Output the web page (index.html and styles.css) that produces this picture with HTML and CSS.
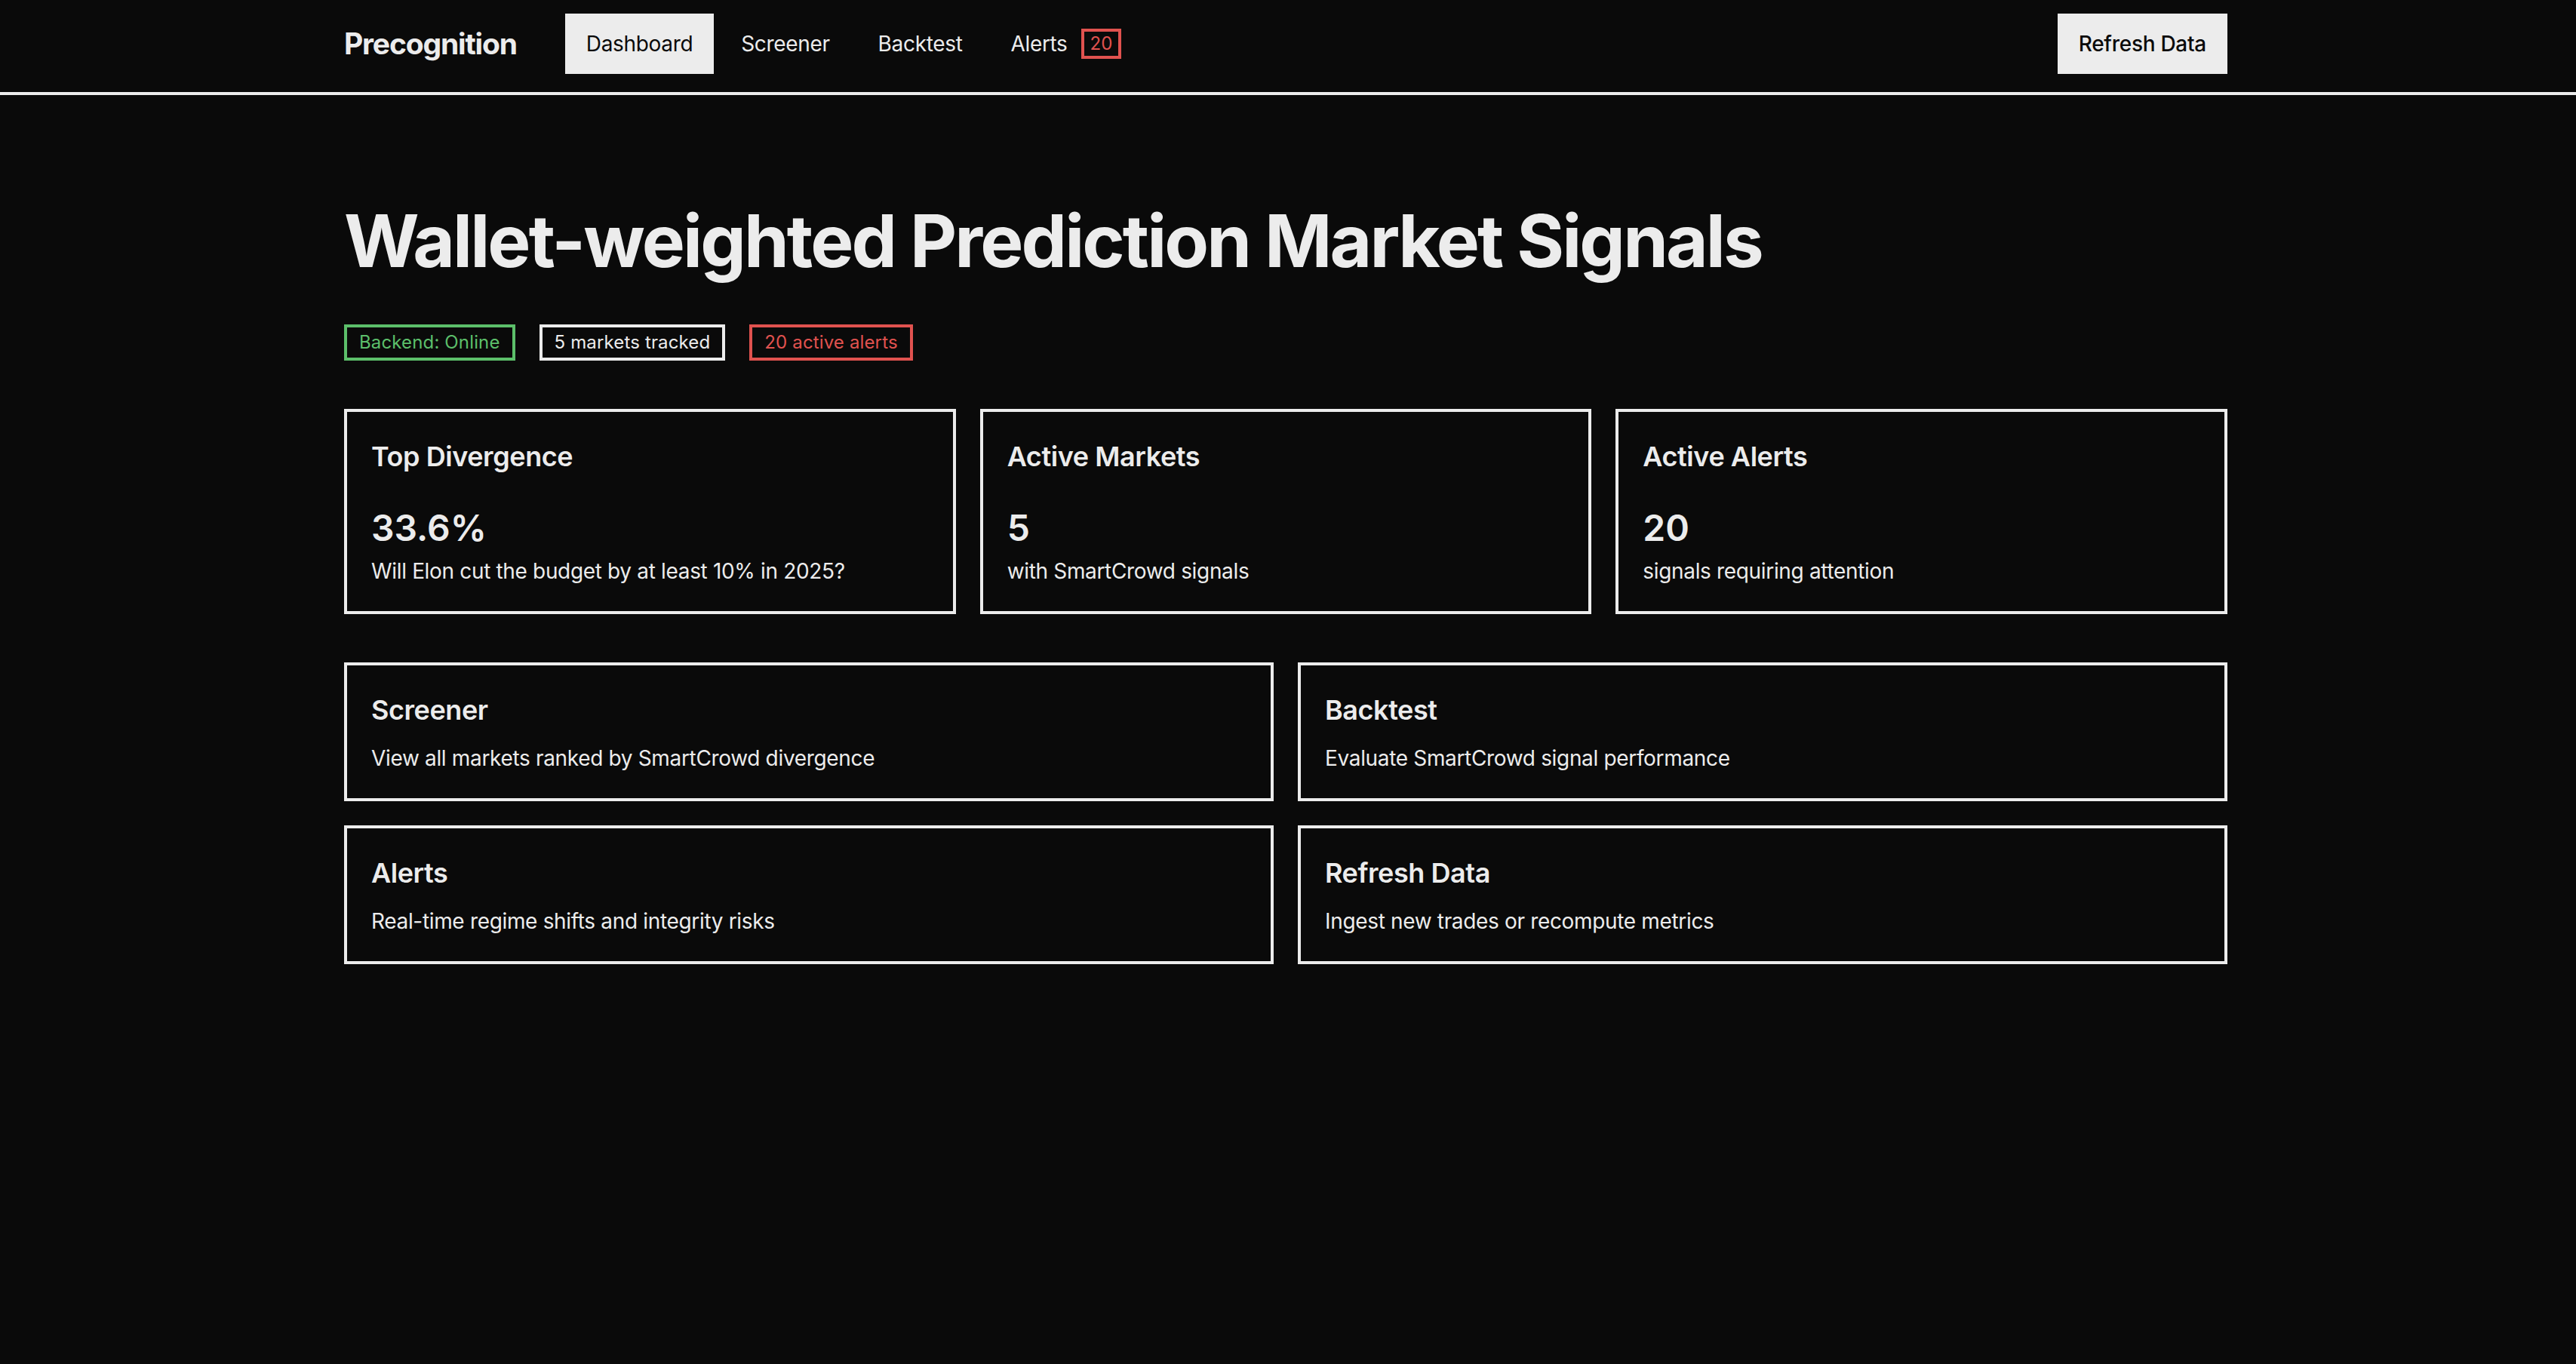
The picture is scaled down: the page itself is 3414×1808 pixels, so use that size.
FILE: index.html
```html
<!DOCTYPE html>
<html lang="en">
<head>
<meta charset="utf-8">
<title>Precognition</title>
<link rel="stylesheet" href="styles.css">
</head>
<body>
<header class="topbar">
  <div class="container topbar-inner">
    <div class="topbar-left">
      <div class="logo">Precognition</div>
      <nav class="nav">
        <a class="nav-link active">Dashboard</a>
        <a class="nav-link">Screener</a>
        <a class="nav-link">Backtest</a>
        <a class="nav-link">Alerts <span class="nav-badge">20</span></a>
      </nav>
    </div>
    <button class="btn">Refresh Data</button>
  </div>
</header>
<main class="container main">
  <h1 class="title">Wallet-weighted Prediction Market Signals</h1>
  <div class="status-row">
    <span class="pill pill-green">Backend: Online</span>
    <span class="pill pill-white">5 markets tracked</span>
    <span class="pill pill-red">20 active alerts</span>
  </div>
  <section class="stats">
    <div class="card">
      <h3 class="card-title stat-title">Top Divergence</h3>
      <div class="stat-value">33.6%</div>
      <p class="card-text">Will Elon cut the budget by at least 10% in 2025?</p>
    </div>
    <div class="card">
      <h3 class="card-title stat-title">Active Markets</h3>
      <div class="stat-value">5</div>
      <p class="card-text">with SmartCrowd signals</p>
    </div>
    <div class="card">
      <h3 class="card-title stat-title">Active Alerts</h3>
      <div class="stat-value">20</div>
      <p class="card-text">signals requiring attention</p>
    </div>
  </section>
  <section class="links">
    <div class="card">
      <h3 class="card-title link-title">Screener</h3>
      <p class="card-text">View all markets ranked by SmartCrowd divergence</p>
    </div>
    <div class="card">
      <h3 class="card-title link-title">Backtest</h3>
      <p class="card-text">Evaluate SmartCrowd signal performance</p>
    </div>
    <div class="card">
      <h3 class="card-title link-title">Alerts</h3>
      <p class="card-text">Real-time regime shifts and integrity risks</p>
    </div>
    <div class="card">
      <h3 class="card-title link-title">Refresh Data</h3>
      <p class="card-text">Ingest new trades or recompute metrics</p>
    </div>
  </section>
</main>
</body>
</html>
```

FILE: styles.css
```css
* { box-sizing: border-box; }

html, body {
  margin: 0;
  padding: 0;
  background: #0a0a0a;
  color: #ececec;
  font-family: Inter, "Noto Sans", "Liberation Sans", sans-serif;
  min-height: 100vh;
}

body {
  padding-right: 6px;
}

.container {
  width: 2496px;
  margin: 0 auto;
}

.topbar {
  border-bottom: 4px solid #ececec;
  padding: 18px 6px 24px 0;
  margin-right: -6px;
}

.topbar-inner {
  display: flex;
  align-items: center;
  justify-content: space-between;
}

.topbar-left {
  display: flex;
  align-items: center;
  gap: 64px;
}

.logo {
  font-size: 39px;
  font-weight: 700;
  letter-spacing: -0.03em;
  line-height: 56px;
}

.nav {
  display: flex;
  align-items: center;
  gap: 8px;
}

.nav-link {
  display: flex;
  align-items: center;
  gap: 18px;
  font-size: 28px;
  line-height: 40px;
  letter-spacing: -0.012em;
  padding: 20px 28px;
  color: #ececec;
  cursor: pointer;
}

.nav-link.active {
  background: #ececec;
  color: #0a0a0a;
}

.nav-badge {
  border: 4px solid #e0524f;
  color: #e0524f;
  font-size: 24px;
  line-height: 32px;
  letter-spacing: 0;
  padding: 0 8px;
}

.btn {
  font-family: inherit;
  font-size: 28px;
  line-height: 40px;
  letter-spacing: -0.01em;
  padding: 20px 28px;
  background: #ececec;
  color: #0a0a0a;
  border: none;
  border-radius: 0;
  font-weight: 500;
}

.main {
  padding-top: 136px;
  padding-bottom: 64px;
}

.title {
  margin: 0 0 53px;
  font-size: 96px;
  line-height: 1.2;
  font-weight: 700;
  letter-spacing: -0.03em;
}

.status-row {
  display: flex;
  gap: 32px;
  margin-bottom: 64px;
}

.pill {
  border: 4px solid;
  font-size: 24px;
  line-height: 32px;
  letter-spacing: 0.006em;
  padding: 4px 16px;
}

.pill-green { color: #5cbf6a; border-color: #5cbf6a; }
.pill-white { color: #ececec; border-color: #ececec; }
.pill-red { color: #e0524f; border-color: #e0524f; }

.stats {
  display: grid;
  grid-template-columns: repeat(3, 1fr);
  gap: 32px;
  margin-bottom: 64px;
}

.links {
  display: grid;
  grid-template-columns: repeat(2, 1fr);
  gap: 32px;
}

.card {
  border: 4px solid #ececec;
  padding: 32px;
}

.card-title {
  margin: 0;
  font-size: 36px;
  line-height: 54px;
  font-weight: 600;
  letter-spacing: -0.012em;
}

.stat-title { margin-bottom: 32px; }
.link-title { margin-bottom: 16px; }

.stat-value {
  font-size: 48px;
  line-height: 72px;
  font-weight: 600;
}

.card-text {
  margin: 0;
  font-size: 28px;
  line-height: 42px;
  letter-spacing: -0.012em;
}
```
